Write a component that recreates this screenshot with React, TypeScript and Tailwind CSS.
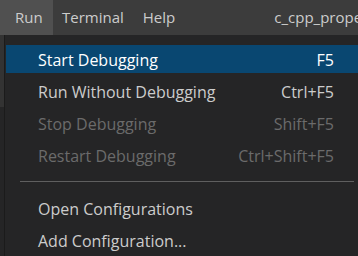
const items = [
  { label: "Start Debugging", key: "F5", active: true },
  { label: "Run Without Debugging", key: "Ctrl+F5" },
  { label: "Stop Debugging", key: "Shift+F5", disabled: true },
  { label: "Restart Debugging", key: "Ctrl+Shift+F5", disabled: true },
];

const configItems = [{ label: "Open Configurations" }, { label: "Add Configuration..." }];

function MenuRow({ label, shortcut, active, disabled }: { label: string; shortcut?: string; active?: boolean; disabled?: boolean }) {
  return (
    <div
      className={`flex h-[28px] items-center justify-between pl-[32px] pr-[24px] pt-[2px] ${active ? "bg-[#094771] text-white" : ""} ${
        disabled ? "text-[#6b6b6b]" : active ? "" : "text-[#cccccc]"
      }`}
    >
      <span>{label}</span>
      {shortcut && <span>{shortcut}</span>}
    </div>
  );
}

export default function App() {
  return (
    <div className="w-[358px] h-[256px] overflow-hidden bg-[#1e1e1e] font-['Open_Sans',sans-serif]">
      <div className="flex h-[35px] items-center overflow-hidden bg-[#3c3c3c] text-[15px] text-[#cccccc] whitespace-nowrap">
        <div className="flex h-full w-[53px] shrink-0 items-center bg-[#505050] pl-[15px]">Run</div>
        <div className="ml-[9px] shrink-0">Terminal</div>
        <div className="ml-[19px] shrink-0">Help</div>
        <div className="ml-[99px] min-w-0 overflow-hidden">c_cpp_properties.json</div>
      </div>
      <div className="flex h-[221px] text-[16px]">
        <div className="w-[4px] flex flex-col">
          <div className="h-[72px] bg-[#333333]" />
          <div className="flex-1 bg-[#252526]" />
        </div>
        <div className="w-[1px] bg-[#1b1b1b]" />
        <div className="flex-1 bg-[#252526] pt-[10px] pl-[1px]">
          <div className="flex flex-col gap-[4px]">
            {items.map((it) => (
              <MenuRow key={it.label} label={it.label} shortcut={it.key} active={it.active} disabled={it.disabled} />
            ))}
          </div>
          <div className="flex h-[25px] items-center pl-[14px] pr-[4px]">
            <div className="h-[1px] w-full bg-[#5f5f5f]" />
          </div>
          <div className="flex flex-col gap-[4px]">
            {configItems.map((it) => (
              <MenuRow key={it.label} label={it.label} />
            ))}
          </div>
        </div>
      </div>
    </div>
  );
}
